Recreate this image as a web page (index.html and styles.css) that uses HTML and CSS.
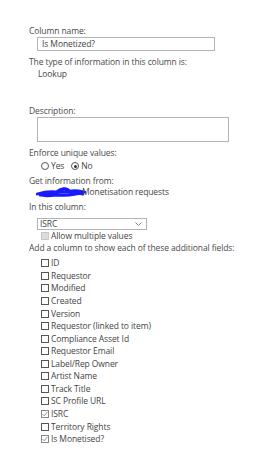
FILE: index.html
```html
<!DOCTYPE html>
<html lang="en">
<head>
    <meta charset="UTF-8">
    <title>Column settings</title>
    <link rel="stylesheet" href="styles.css">
</head>
<body>
    <div class="panel">
        <div class="label first">Column name:</div>
        <div class="text-input">Is Monetized?</div>

        <div class="label gap-s">The type of information in this column is:</div>
        <div class="value">Lookup</div>

        <div class="label gap-l">Description:</div>
        <div class="text-area"></div>

        <div class="label gap-s">Enforce unique values:</div>
        <div class="radio-row">
            <span class="radio"></span><span class="radio-text">Yes</span>
            <span class="radio on"></span><span class="radio-text">No</span>
        </div>

        <div class="label gap-xs">Get information from:</div>
        <div class="source">
            <svg class="scribble" width="50" height="12" viewBox="0 0 50 12">
                <path d="M1 8 C8 6 14 5 20 6 C24 3 30 2 34 5 C39 4 44 5 48 6 C40 9 30 10 20 9 C14 10 8 10 3 9 C10 7 20 7 28 6 C34 6 40 7 47 8" fill="none" stroke="#1a1aff" stroke-width="2.8" stroke-linecap="round"/>
                <path d="M22 5 C25 2 30 1 33 4" fill="none" stroke="#1a1aff" stroke-width="2"/>
            </svg>
            <span>Monetisation requests</span>
        </div>

        <div class="label gap-xs">In this column:</div>
        <div class="select">
            <span>ISRC</span>
            <svg class="chevron" width="7" height="4" viewBox="0 0 7 4"><path d="M0.5 0.5 L3.5 3.5 L6.5 0.5" fill="none" stroke="#666" stroke-width="0.8"/></svg>
        </div>
        <div class="check-row indent">
            <span class="box disabled"></span><span>Allow multiple values</span>
        </div>

        <div class="label">Add a column to show each of these additional fields:</div>
        <div class="field-list">
            <div class="check-row"><span class="box"></span><span>ID</span></div>
            <div class="check-row"><span class="box"></span><span>Requestor</span></div>
            <div class="check-row"><span class="box"></span><span>Modified</span></div>
            <div class="check-row"><span class="box"></span><span>Created</span></div>
            <div class="check-row"><span class="box"></span><span>Version</span></div>
            <div class="check-row"><span class="box"></span><span>Requestor (linked to item)</span></div>
            <div class="check-row"><span class="box"></span><span>Compliance Asset Id</span></div>
            <div class="check-row"><span class="box"></span><span>Requestor Email</span></div>
            <div class="check-row"><span class="box"></span><span>Label/Rep Owner</span></div>
            <div class="check-row"><span class="box"></span><span>Artist Name</span></div>
            <div class="check-row"><span class="box"></span><span>Track Title</span></div>
            <div class="check-row"><span class="box"></span><span>SC Profile URL</span></div>
            <div class="check-row"><span class="box checked"><svg width="8" height="8" viewBox="0 0 8 8"><path d="M1.5 4 L3.2 5.8 L6.5 1.8" fill="none" stroke="#777" stroke-width="0.8"/></svg></span><span>ISRC</span></div>
            <div class="check-row"><span class="box"></span><span>Territory Rights</span></div>
            <div class="check-row"><span class="box checked"><svg width="8" height="8" viewBox="0 0 8 8"><path d="M1.5 4 L3.2 5.8 L6.5 1.8" fill="none" stroke="#777" stroke-width="0.8"/></svg></span><span>Is Monetised?</span></div>
        </div>
    </div>
</body>
</html>
```

FILE: styles.css
```css
/* General */
body {
    margin: 0;
    background: #ffffff;
    font-family: 'Open Sans', 'Noto Sans', sans-serif;
    font-size: 8.5px;
    line-height: 12px;
    letter-spacing: -0.1px;
    color: #444;
}

.panel {
    padding: 25px 0 0 29px;
}

.label {
    color: #4a4a4a;
}

.gap-xs {
    margin-top: 3px;
}

.gap-s {
    margin-top: 5px;
}

.gap-l {
    margin-top: 25px;
}

.value {
    padding-left: 9px;
}

/* Inputs */
.text-input {
    box-sizing: border-box;
    margin-left: 8px;
    width: 178px;
    height: 14px;
    border: 1px solid #b3b3b3;
    padding-left: 4px;
    line-height: 12px;
}

.text-area {
    box-sizing: border-box;
    margin-left: 8px;
    width: 192px;
    height: 25px;
    border: 1px solid #b3b3b3;
}

.radio-row {
    display: flex;
    align-items: center;
    padding-left: 12px;
    margin-top: 1px;
}

.radio {
    box-sizing: border-box;
    width: 8px;
    height: 8px;
    border: 1px solid #555;
    border-radius: 50%;
    margin-right: 2px;
    position: relative;
}

.radio.on::after {
    content: '';
    position: absolute;
    left: 1.5px;
    top: 1.5px;
    width: 3px;
    height: 3px;
    border-radius: 50%;
    background: #333;
}

.radio-text {
    margin-right: 7px;
}

.source {
    display: flex;
    align-items: center;
    padding-left: 7px;
    margin-top: -1px;
}

.scribble {
    margin-right: -4px;
}

.select {
    box-sizing: border-box;
    display: flex;
    align-items: center;
    justify-content: space-between;
    margin-top: 5px;
    margin-left: 8px;
    width: 110px;
    height: 12px;
    border: 1px solid #b3b3b3;
    padding: 0 4px 0 2px;
}

/* Checkboxes */
.check-row {
    display: flex;
    align-items: center;
    padding-left: 12px;
    height: 12.57px;
}

.indent {
    height: 12px;
}

.box {
    box-sizing: border-box;
    display: flex;
    width: 8px;
    height: 8px;
    border: 1px solid #555;
    margin-right: 2px;
    background: #fff;
}

.box svg {
    margin: -1px;
}

.box.checked {
    border-color: #888;
}

.box.disabled {
    border-color: #c8c8c8;
    background: #dcdcdc;
}

.field-list {
    margin-top: 3px;
}
```
